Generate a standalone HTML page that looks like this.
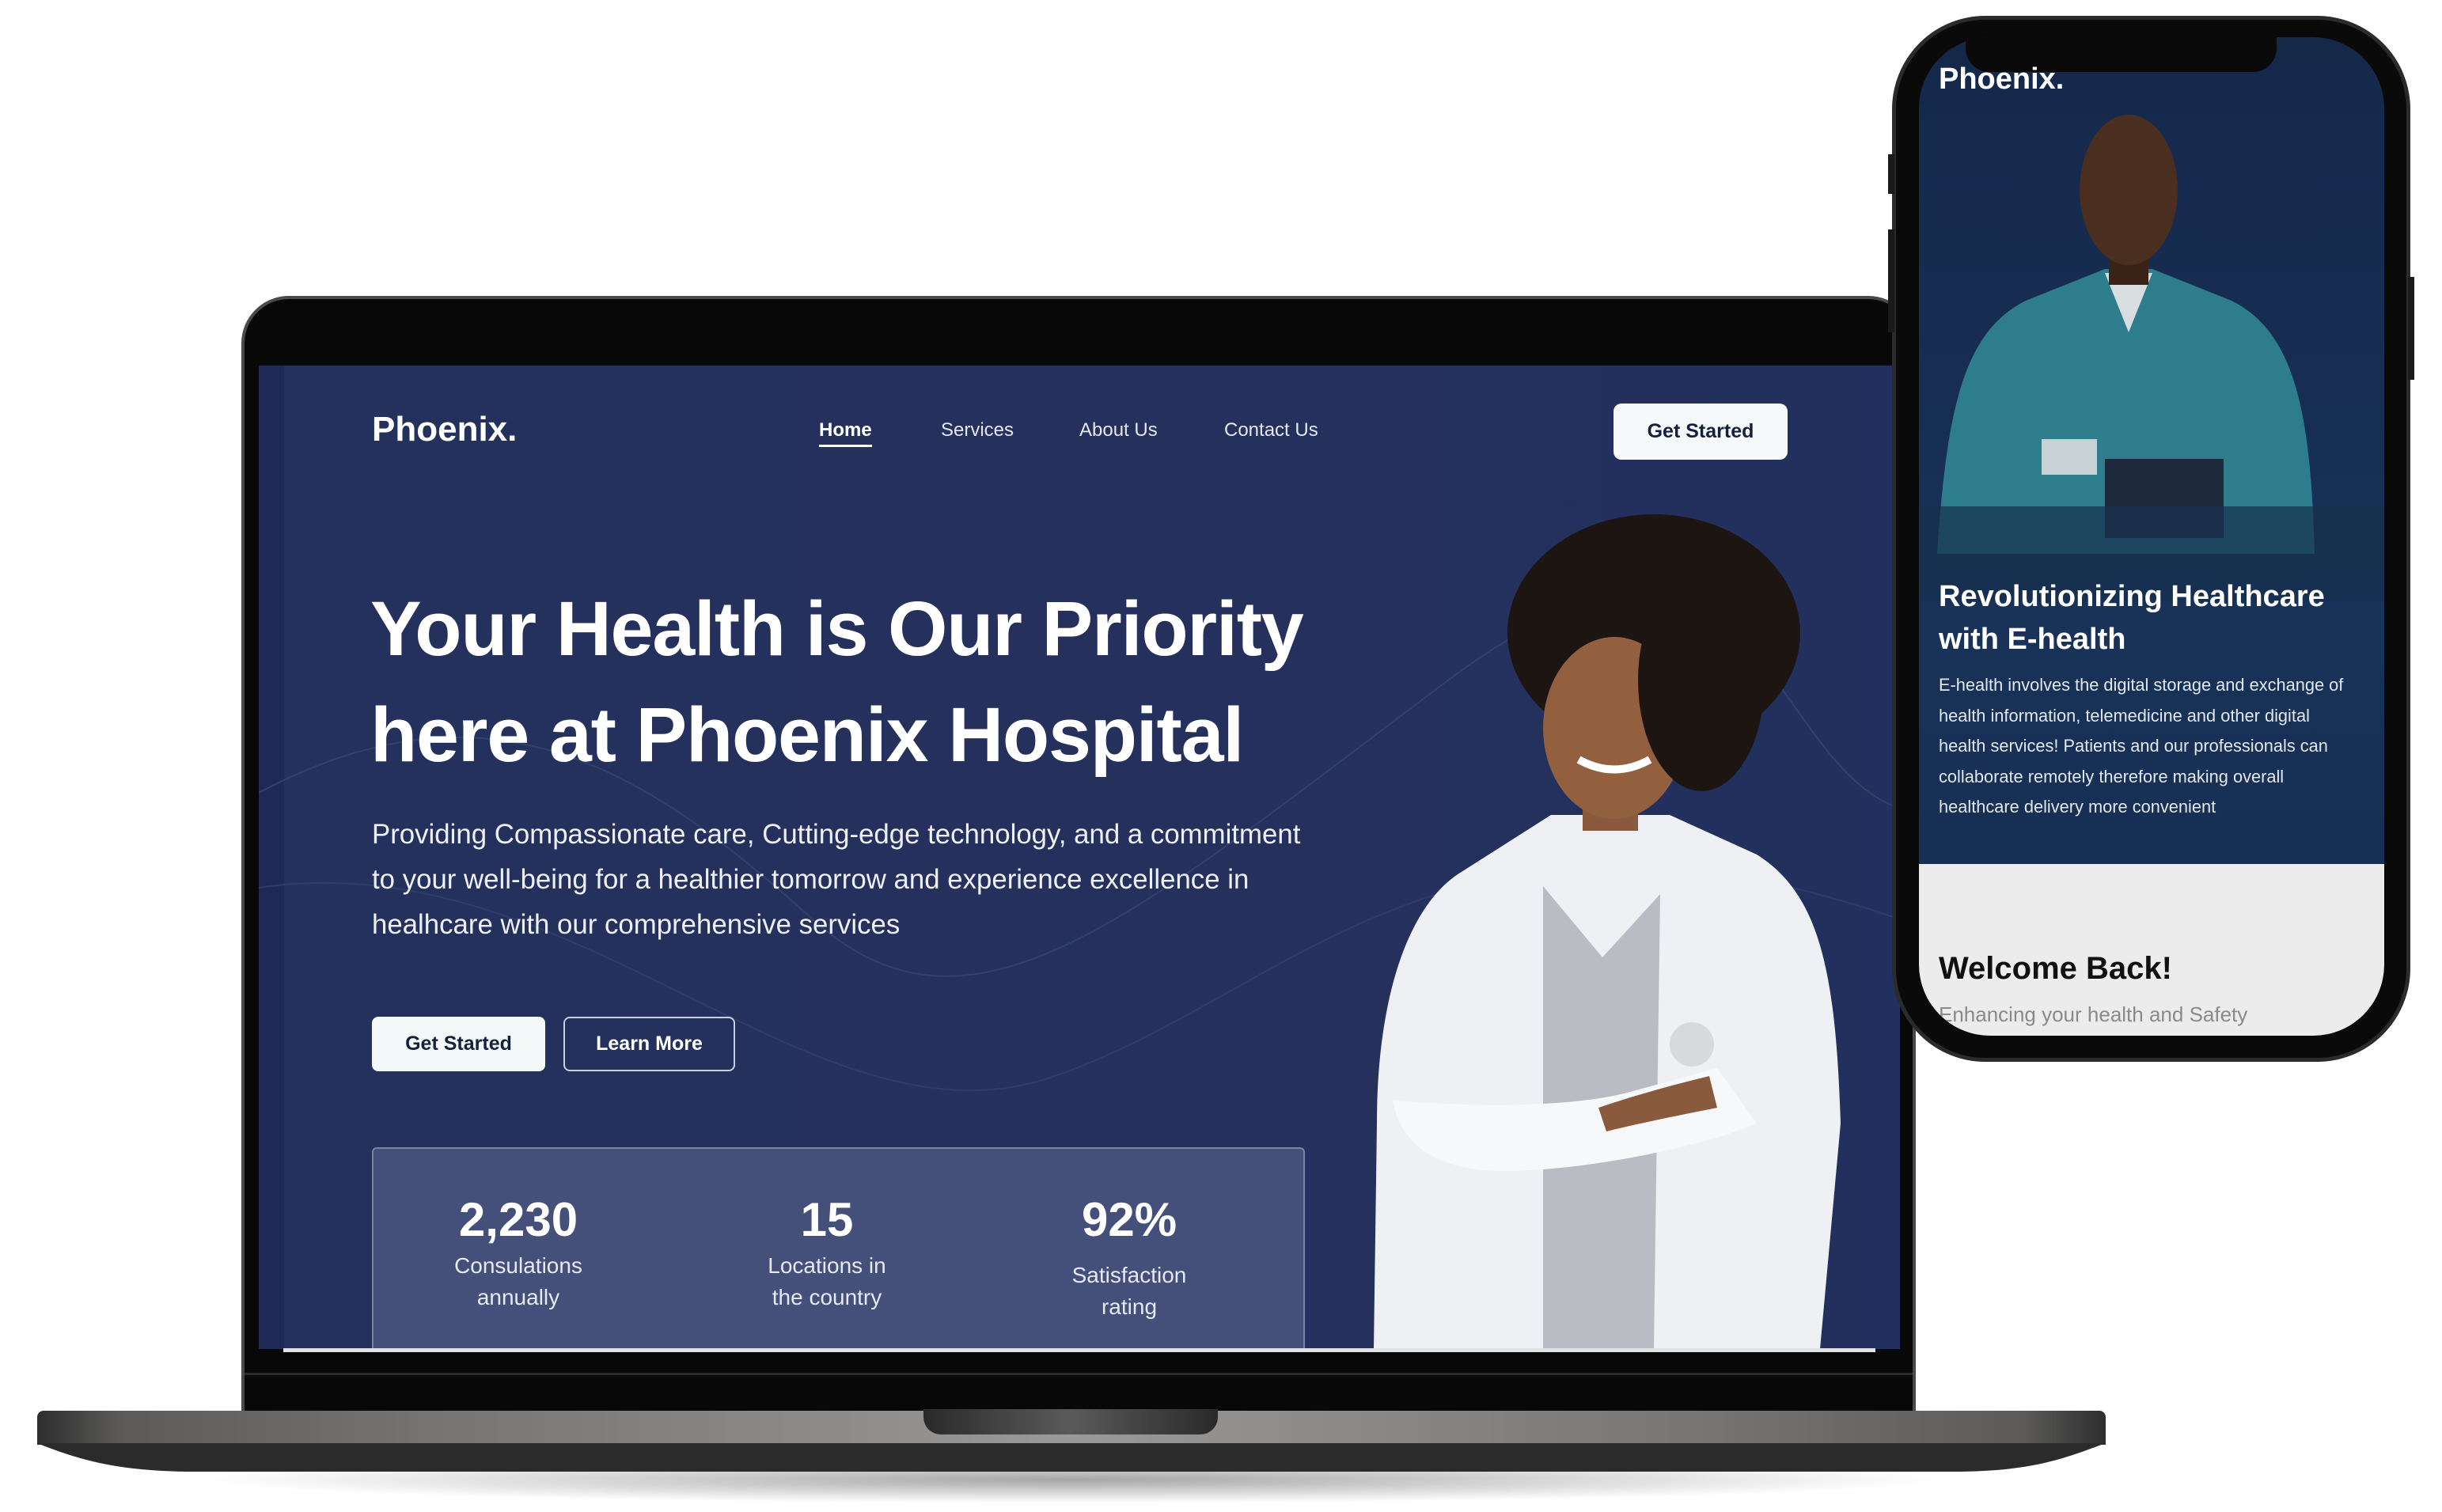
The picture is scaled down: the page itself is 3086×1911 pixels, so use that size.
<!DOCTYPE html>
<html><head><meta charset="utf-8"><style>
*{margin:0;padding:0;box-sizing:border-box}
body{width:3086px;height:1911px;background:#fff;position:relative;overflow:hidden;font-family:"Liberation Sans",sans-serif}
.a{position:absolute}
.w{color:#fff;white-space:nowrap}
</style></head><body>
<div class="a" style="left:246px;top:1840px;width:2214px;height:60px;border-radius:50%;background:radial-gradient(ellipse at center,rgba(0,0,0,.35),rgba(0,0,0,0) 70%)"></div>
<div class="a" style="left:305px;top:374px;width:2116px;height:1412px;background:#080808;border:4px solid #4a4a4a;border-bottom:none;border-radius:60px 60px 0 0"></div>
<div class="a" style="left:309px;top:1735px;width:2108px;height:3px;background:#2a2a2a"></div>
<div class="a" style="left:327px;top:462px;width:2074px;height:1243px;background:linear-gradient(90deg,#25315d 0%,#25315c 70%,#21305e 100%);overflow:hidden">
  <div class="a" style="left:0;top:0;width:32px;height:1243px;background:#1e2a55"></div>
  <svg class="a" style="left:0;top:0" width="2074" height="1243"><path d="M0 540 C300 380 500 520 700 700 S1100 700 1500 400 S1900 500 2074 560" stroke="#34406c" stroke-width="2" fill="none"/><path d="M0 660 C400 600 700 1000 1000 900 S1500 500 2074 700" stroke="#303c68" stroke-width="2" fill="none"/></svg>
  <div class="a w" style="left:143px;top:56px;font-size:44px;font-weight:bold">Phoenix.</div>
  <div class="a w" style="left:708px;top:68px;font-size:24px;font-weight:bold">Home</div>
  <div class="a" style="left:708px;top:100px;width:67px;height:3px;background:#fff"></div>
  <div class="a w" style="left:862px;top:68px;font-size:24px;color:#e4e7f0">Services</div>
  <div class="a w" style="left:1037px;top:68px;font-size:24px;color:#e4e7f0">About Us</div>
  <div class="a w" style="left:1220px;top:68px;font-size:24px;color:#e4e7f0">Contact Us</div>
  <div class="a" style="left:1712px;top:48px;width:220px;height:71px;background:#f5f9fa;border-radius:10px;font-size:25px;font-weight:bold;color:#15203f;text-align:center;line-height:71px">Get Started</div>
  <div class="a w" style="left:141px;top:266px;font-size:97px;font-weight:bold;line-height:134px;letter-spacing:-1.2px">Your Health is Our Priority<br>here at Phoenix Hospital</div>
  <div class="a w" style="left:143px;top:564px;font-size:34.8px;line-height:57px;color:#eef0f6">Providing Compassionate care, Cutting-edge technology, and a commitment<br>to your well-being for a healthier tomorrow and experience excellence in<br>healhcare with our comprehensive services</div>
  <div class="a" style="left:143px;top:823px;width:219px;height:69px;background:#f3f8f8;border-radius:8px;font-size:25px;font-weight:bold;color:#15203f;text-align:center;line-height:69px">Get Started</div>
  <div class="a" style="left:385px;top:823px;width:217px;height:69px;border:2px solid #c9cde0;border-radius:8px;font-size:25px;font-weight:bold;color:#fff;text-align:center;line-height:65px">Learn More</div>
  <div class="a" style="left:143px;top:988px;width:1179px;height:280px;background:#45507a;border:2px solid #7a83a6;border-radius:6px"></div>
  <div class="a w" style="left:228px;top:1045px;width:200px;text-align:center;font-size:60px;font-weight:bold">2,230</div>
  <div class="a w" style="left:178px;top:1118px;width:300px;text-align:center;font-size:28px;line-height:40px;color:#e6e9f2">Consulations<br>annually</div>
  <div class="a w" style="left:618px;top:1045px;width:200px;text-align:center;font-size:60px;font-weight:bold">15</div>
  <div class="a w" style="left:568px;top:1118px;width:300px;text-align:center;font-size:28px;line-height:40px;color:#e6e9f2">Locations in<br>the country</div>
  <div class="a w" style="left:1000px;top:1045px;width:200px;text-align:center;font-size:60px;font-weight:bold">92%</div>
  <div class="a w" style="left:950px;top:1130px;width:300px;text-align:center;font-size:28px;line-height:40px;color:#e6e9f2">Satisfaction<br>rating</div>
  <svg class="a" style="left:1380px;top:180px" width="640" height="1063" viewBox="1707 642 640 1063">
    <path d="M1736 1705 L1740 1420 C1740 1260 1780 1140 1850 1100 L1960 1030 L2110 1030 L2220 1080 C2300 1130 2320 1230 2326 1420 L2300 1705 Z" fill="#eef0f3"/>
    <path d="M1950 1120 L2025 1210 L2098 1130 L2090 1705 L1950 1705 Z" fill="#b9bcc2"/>
    <path d="M1760 1390 C1850 1400 1990 1400 2060 1380 L2170 1350 L2220 1420 C2150 1450 2000 1480 1900 1480 C1820 1480 1770 1450 1760 1390Z" fill="#f7f8fa"/>
    <path d="M2020 1400 C2080 1380 2120 1370 2160 1360 L2170 1400 C2120 1410 2070 1420 2030 1430Z" fill="#8a5a3e"/>
    <rect x="2000" y="960" width="70" height="90" fill="#8a5a3e"/>
    <ellipse cx="2090" cy="800" rx="185" ry="150" fill="#1c1512"/>
    <ellipse cx="2040" cy="920" rx="90" ry="115" fill="#93603f"/>
    <ellipse cx="2150" cy="860" rx="80" ry="140" fill="#1c1512"/>
    <path d="M1995 960 Q2040 985 2085 960" stroke="#fff" stroke-width="10" fill="none"/>
    <circle cx="2138" cy="1320" r="28" fill="#d7d9dd"/>
  </svg>
</div>
<div class="a" style="left:358px;top:1704px;width:2012px;height:5px;background:#dfe1e4"></div>
<div class="a" style="left:47px;top:1783px;width:2614px;height:43px;border-radius:8px 8px 0 0;background:linear-gradient(90deg,#2e2e2e 0%,#5c5b5a 4%,#777674 20%,#9a9997 50%,#777674 80%,#5c5b5a 96%,#2e2e2e 100%)"></div>
<div class="a" style="left:1167px;top:1781px;width:372px;height:32px;border-radius:0 0 22px 22px;background:linear-gradient(90deg,#2a2a2a,#5a5a5a 50%,#2a2a2a)"></div>
<svg class="a" style="left:47px;top:1824px" width="2614" height="38"><path d="M0 0 H2614 C2560 20 2520 36 2420 36 H200 C100 36 50 20 0 0Z" fill="#2b2b2b"/></svg>
<div class="a" style="left:2391px;top:20px;width:655px;height:1322px;background:#0a0a0a;border-radius:118px;border:5px solid #2b2b2b"></div>
<div class="a" style="left:2386px;top:195px;width:8px;height:50px;background:#1a1a1a"></div>
<div class="a" style="left:2386px;top:290px;width:8px;height:130px;background:#1a1a1a"></div>
<div class="a" style="left:3043px;top:350px;width:8px;height:130px;background:#1a1a1a"></div>
<div class="a" style="left:2425px;top:47px;width:588px;height:1262px;border-radius:90px;overflow:hidden;background:linear-gradient(180deg,#14284a,#193258 60%,#152c50)">
  <svg class="a" style="left:0;top:0" width="588" height="1050" viewBox="2425 47 588 1050">
    <path d="M2448 700 C2460 520 2480 420 2560 380 L2660 340 L2720 340 L2820 380 C2900 420 2920 520 2925 700Z" fill="#2d7d8c"/>
    <path d="M2660 345 L2690 420 L2720 345Z" fill="#d8dde0"/>
    <rect x="2660" y="580" width="150" height="100" fill="#1e2a3c"/>
    <rect x="2580" y="555" width="70" height="45" fill="#c8d2d6"/>
    <rect x="2665" y="300" width="50" height="60" fill="#3a2418"/>
    <ellipse cx="2690" cy="240" rx="62" ry="95" fill="#4a2e1f"/>
    <rect x="2425" y="640" width="588" height="120" fill="#17304f" opacity=".7"/>
  </svg>
  <div class="a" style="left:59px;top:0;width:393px;height:44px;background:#0a0a0a;border-radius:0 0 30px 30px"></div>
  <div class="a w" style="left:25px;top:32px;font-size:38px;font-weight:bold">Phoenix.</div>
  <div class="a w" style="left:25px;top:680px;font-size:38px;font-weight:bold;line-height:54px">Revolutionizing Healthcare<br>with E-health</div>
  <div class="a w" style="left:25px;top:800px;font-size:21.8px;line-height:38.5px;color:#e3e8ef">E-health involves the digital storage and exchange of<br>health information, telemedicine and other digital<br>health services! Patients and our professionals can<br>collaborate remotely therefore making overall<br>healthcare delivery more convenient</div>
  <div class="a" style="left:0;top:1045px;width:588px;height:220px;background:#ececec"></div>
  <div class="a" style="left:25px;top:1155px;font-size:40px;font-weight:bold;color:#111;white-space:nowrap">Welcome Back!</div>
  <div class="a" style="left:25px;top:1220px;font-size:26px;color:#8a8a8a;white-space:nowrap">Enhancing your health and Safety</div>
</div>
</body></html>
